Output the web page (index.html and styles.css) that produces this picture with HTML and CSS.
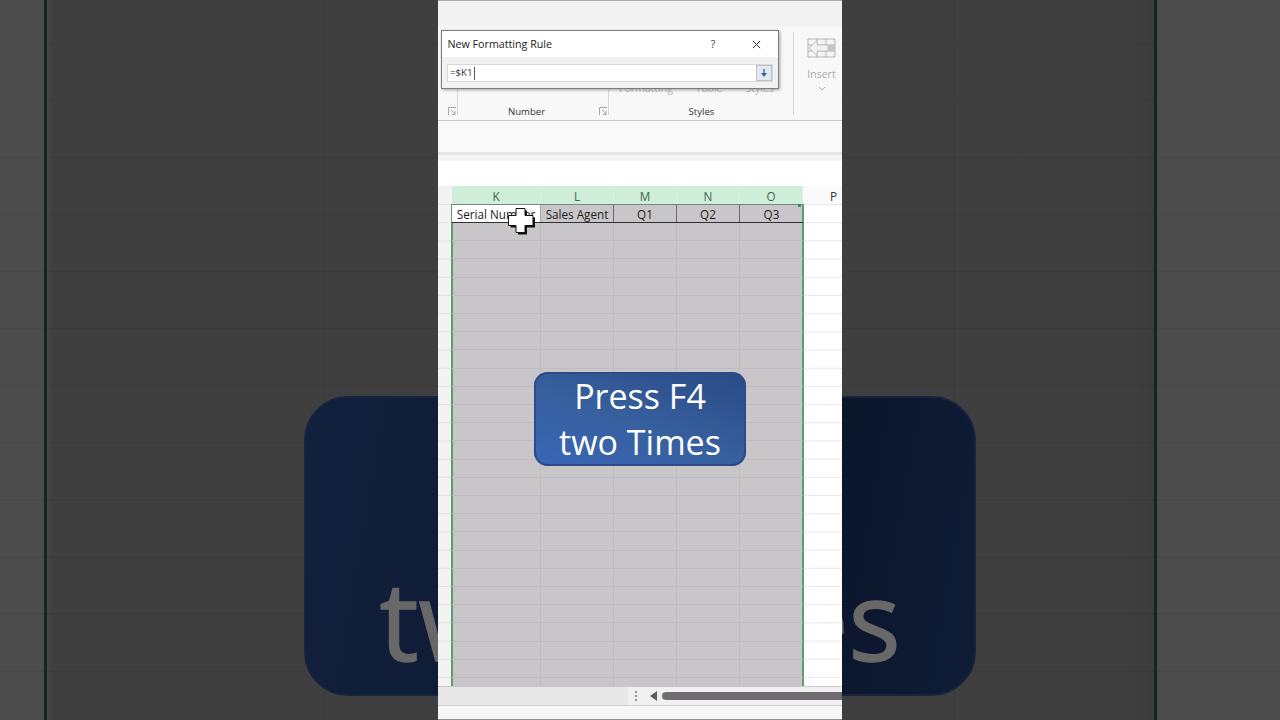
FILE: index.html
```html
<!DOCTYPE html>
<html lang="en">
<head>
<meta charset="utf-8">
<title>New Formatting Rule</title>
<link rel="stylesheet" href="styles.css">
</head>
<body>
<div class="stage">
  <aside class="side side-left"><div class="side-outer"></div><div class="side-inner"></div></aside>
  <main class="phone">
    <div class="title-strip"></div>
    <section class="ribbon">
      <div class="group group-a"><span class="launcher"><svg viewBox="0 0 9 9"><path d="M.5 8V.5H8M3 3l4 4M7 4v3.500H4" /></svg></span></div>
      <div class="group group-number">
        <span class="group-label">Number</span>
        <span class="launcher"><svg viewBox="0 0 9 9"><path d="M.5 8V.5H8M3 3l4 4M7 4v3.500H4" /></svg></span>
      </div>
      <div class="group group-styles">
        <div class="hidden-labels"><span>Formatting</span><span>Table</span><span>Styles</span></div>
        <span class="group-label">Styles</span>
      </div>
      <div class="group group-insert">
        <svg class="insert-icon" viewBox="0 0 29 20">
          <path class="grid-lines" d="M1 1h27v18H1zM10 1v18M19 1v18M1 7h27M1 13h27" />
          <path class="grid-band" d="M10 7h18v6H10z" />
          <path class="grid-arrow" d="M10 2.500 2 10l8 7.500V13h11V7H10z" />
        </svg>
        <span class="insert-label">Insert</span>
        <svg class="insert-chevron" viewBox="0 0 8 5"><path d="M1 1l3 3 3-3" /></svg>
      </div>
    </section>
    <div class="ribbon-foot"></div>
    <div class="formula-gap"></div>
    <section class="sheet">
      <div class="col-heads">
        <span class="corner"></span>
        <span class="col-head col-k">K</span>
        <span class="col-head col-l">L</span>
        <span class="col-head col-q">M</span>
        <span class="col-head col-q">N</span>
        <span class="col-head col-q">O</span>
        <span class="col-head-free">P</span>
      </div>
      <div class="sheet-body">
        <div class="gutter"></div>
        <div class="selection">
          <div class="head-row">
            <span class="cell cell-active col-k">Serial Number</span>
            <span class="cell col-l">Sales Agent</span>
            <span class="cell col-q">Q1</span>
            <span class="cell col-q">Q2</span>
            <span class="cell col-q">Q3</span>
          </div>
          <div class="sel-rows">
            <span class="sel-col col-k"></span>
            <span class="sel-col col-l"></span>
            <span class="sel-col col-q"></span>
            <span class="sel-col col-q"></span>
            <span class="sel-col col-q"></span>
          </div>
          <span class="fill-handle"></span>
        </div>
        <div class="free-cells"></div>
      </div>
    </section>
    <div class="scroll-row">
      <div class="scroll-tabs"></div>
      <div class="scroll-track">
        <span class="scroll-dots"></span>
        <svg class="scroll-left" viewBox="0 0 8 10"><path d="M7 0v10L0 5z" /></svg>
        <span class="scroll-thumb"></span>
      </div>
    </div>
    <div class="status"></div>
  </main>
  <aside class="side side-right"><div class="side-inner"></div><div class="side-outer"></div></aside>

  <div class="ghost-badge"><span class="ghost-text">two Times</span></div>

  <div class="dialog">
    <div class="dialog-title">
      <span class="dialog-name">New Formatting Rule</span>
      <span class="dialog-help">?</span>
      <svg class="dialog-close" viewBox="0 0 10 10"><path d="M1 1l8 8M9 1l-8 8" /></svg>
    </div>
    <div class="dialog-body">
      <div class="ref-input">
        <span class="ref-text">=$K1</span><span class="caret"></span>
        <span class="ref-button"><svg viewBox="0 0 10 10"><path d="M5 1v6" class="ref-stem" /><path d="M2 5h6L5 9z" class="ref-head" /></svg></span>
      </div>
    </div>
  </div>

  <svg class="cursor" viewBox="0 0 30 28">
    <path class="cursor-shadow" d="M11 3.500h9v7h8v10h-8v7h-9v-7H3.500v-10H11z" />
    <path class="cursor-body" d="M9 1.500h9v7h8v10h-8v7H9v-7H1.500v-10H9z" />
  </svg>

  <div class="callout">Press F4<br>two Times</div>
</div>
</body>
</html>
```
FILE: styles.css
```css
* { box-sizing: border-box; }
html, body { margin: 0; height: 100%; }
body { font-family: "Open Sans", "Noto Sans", sans-serif; background: #3f3f3f; overflow: hidden; }

.stage { position: relative; display: flex; width: 1280px; height: 720px; overflow: hidden; }

/* Blurred backdrop on both sides */
.side {
  position: relative; z-index: 0;
  flex: 0 0 438px; height: 720px; display: flex;
  background-image: repeating-linear-gradient(to bottom, transparent 0 43px, rgba(0,0,0,.06) 43px 44.500px, transparent 44.500px 57px);
}
.side-outer { background-color: rgba(255,255,255,.07); }
.side-inner { flex: 1; }
.side-left .side-outer { border-right: 3px solid #14261b; flex: 0 0 47px; }
.side-right .side-outer { border-left: 3px solid #14261b; flex: 0 0 126px; }
.side-left .side-inner { background-image: linear-gradient(to right, rgba(255,255,255,.03), transparent 6px, transparent 277px, rgba(0,0,0,.07) 277px 278px, transparent 278px); }
.side-right .side-inner { background-image: linear-gradient(to right, transparent 112px, rgba(0,0,0,.07) 112px 113px, transparent 113px, transparent 280px, rgba(0,0,0,.05)); }

.ghost-badge {
  position: absolute; left: 304px; top: 396px; width: 672px; height: 300px;
  border-radius: 44px; background: linear-gradient(100deg, #11203d, #0c162b 75%, #0e1c36);
  border: 2px solid #16243f; overflow: hidden; z-index: 0;
}
.ghost-text {
  position: absolute; left: 0; right: 0; top: 156px; text-align: center;
  font-size: 109.500px; line-height: 130px; color: #686868; -webkit-text-stroke: 1.500px #686868;
}

/* Centre column */
.phone { position: relative; z-index: 1; flex: 0 0 404px; height: 720px; display: flex; flex-direction: column; background: #fff; }
.title-strip { height: 26px; background: #f3f2f2; border-top: 1px solid #a8a8a8; flex: none; }

.ribbon { height: 95px; flex: none; display: flex; background: #f9f8f8; border-bottom: 1px solid #cbcaca; }
.group { position: relative; display: flex; flex-direction: column; align-items: center; justify-content: flex-end; padding-bottom: 1px; }
.group::after { content: ""; position: absolute; right: 0; top: 6px; bottom: 5px; width: 1px; background: #d9d8d8; }
.group-a { width: 20px; }
.group-number { width: 151px; padding-right: 14px; }
.group-styles { width: 185px; }
.group-insert { width: 47px; justify-content: flex-start; padding: 12px 0 0 8px; }
.group-insert::after { content: none; }
.group-label { font-size: 9.600px; line-height: 14px; color: #333; }
.launcher { position: absolute; right: 1px; bottom: 4px; width: 9px; height: 9px; }
.launcher svg { display: block; width: 9px; height: 9px; fill: none; stroke: #a6a6a6; stroke-width: 1; }
.hidden-labels { position: absolute; top: 55px; left: 10px; display: flex; gap: 23px; font-size: 10.500px; line-height: 14px; color: #b5b5b5; }
.insert-icon { width: 29px; height: 20px; flex: none; }
.grid-lines { fill: #f4f4f4; stroke: #b4b4b4; stroke-width: 1; }
.grid-band { fill: #c6c6c6; }
.grid-arrow { fill: #f2f2f2; stroke: #c2c2c2; stroke-width: 1; }
.insert-label { margin-top: 9px; font-size: 10.500px; line-height: 14px; color: #aaa; }
.insert-chevron { width: 8px; height: 5px; margin-top: 5px; fill: none; stroke: #b0b0b0; stroke-width: 1; }

.ribbon-foot { height: 34px; flex: none; background: #faf9f9; border-bottom: 3px solid #e6e5e5; }
.formula-gap { height: 31px; flex: none; background: linear-gradient(to bottom, #f5f4f4 0 6px, #fff 6px); }

.sheet { flex: 1; display: flex; flex-direction: column; min-height: 0; }
.col-heads { display: flex; height: 18px; flex: none; font-size: 11.700px; line-height: 20px; }
.corner { flex: 0 0 14px; background: #f3f2f2; }
.col-k { flex: 0 0 89px; }
.col-l { flex: 0 0 73px; }
.col-q { flex: 0 0 63px; }
.col-head { text-align: center; background: #cfeeda; border-right: 1px solid #dcefe2; color: #3c6650; }
.col-head-free { flex: 1; text-align: right; padding-right: 5px; color: #333; background: #fafafa; }

.sheet-body { flex: 1; display: flex; min-height: 0; position: relative; }
.gutter { flex: 0 0 14px; background-color: #f4f3f3; background-image: linear-gradient(to bottom, transparent 17.200px, #e2e2e2 17.200px); background-size: 100% 18.200px; background-position: 0 1px; }
.selection { position: relative; flex: 0 0 353px; display: flex; flex-direction: column; border-left: 2px solid #5f9a72; border-right: 2px solid #5f9a72; margin-left: -1px; margin-right: -1px; background: #c8c6c8; }
.head-row { display: flex; height: 19px; flex: none; margin-left: -1px; margin-right: -1px; font-size: 11.700px; color: #1c1c1c; border-bottom: 1px solid #2f2f2f; border-top: 1px solid #6f8a78; }
.cell { text-align: center; white-space: nowrap; overflow: hidden; border-right: 1px solid #6b6a6b; line-height: 18px; }
.cell-active { background: #fff; border-right-color: #a8a6a8; }
.cell:last-child { border-right: 0; }
.sel-rows { flex: 1; display: flex; margin-left: -1px; margin-right: -1px; background-image: repeating-linear-gradient(to bottom, transparent 0 17.200px, #bebcbe 17.200px 18.200px); }
.sel-col { border-right: 1px solid #bebcbe; }
.sel-col:last-child { border-right: 0; }
.fill-handle { position: absolute; right: 1px; top: 0; width: 3px; height: 3px; background: #3a8a58; }
.free-cells { flex: 1; background-color: #fff; background-image: linear-gradient(to bottom, transparent 17.200px, #e6e6e6 17.200px); background-size: 100% 18.200px; background-position: 0 1px; }

.scroll-row { height: 20px; flex: none; display: flex; background: #e9e8e9; border-top: 1px solid #c9c8c9; border-bottom: 1px solid #d2d1d2; }
.scroll-tabs { flex: 0 0 190px; }
.scroll-track { flex: 1; display: flex; align-items: center; background: #f0f0f1; padding-left: 7px; }
.scroll-dots { width: 2px; height: 10px; background: repeating-linear-gradient(to bottom, #9a9a9a 0 2px, transparent 2px 4px); }
.scroll-left { width: 8px; height: 10px; margin-left: 13px; fill: #5c5b5c; }
.scroll-thumb { flex: 1; height: 8px; margin-left: 4px; background: #6f6d70; border-radius: 4px 0 0 4px; }

.status { height: 14px; flex: none; background: #f8f7f8; border-bottom: 1px solid #8f8f8f; }

/* Dialog floating over the ribbon */
.dialog {
  position: absolute; z-index: 2; left: 441px; top: 30px; width: 338px; height: 59px;
  background: #fff; border: 1px solid #7e7e7e; box-shadow: 1px 1px 3px rgba(0,0,0,.35);
  display: flex; flex-direction: column;
}
.dialog-title { height: 26px; flex: none; display: flex; align-items: center; padding-left: 5.500px; font-size: 10.700px; color: #222; }
.dialog-name { flex: 1; }
.dialog-help { width: 12px; text-align: center; font-size: 10.500px; margin-right: 33px; color: #333; }
.dialog-close { width: 9px; height: 9px; margin-right: 17px; fill: none; stroke: #333; stroke-width: 1.100; }
.dialog-body { flex: 1; background: #f2f1f1; padding: 7px 5px 6px 5px; }
.ref-input { height: 18px; display: flex; align-items: center; background: #fff; border: 1px solid #d8d8d8; padding-left: 2px; font-size: 9.700px; color: #333; }
.ref-text { line-height: 14px; }
.caret { width: 1px; height: 13px; background: #555; margin-left: 1px; }
.ref-button { margin-left: auto; width: 16px; height: 16px; display: flex; align-items: center; justify-content: center; background: #e4e9ef; border: 1px solid #bcc1c6; }
.ref-button svg { width: 10px; height: 10px; }
.ref-stem { stroke: #3f6fa8; stroke-width: 1.400; fill: none; }
.ref-head { fill: #2f67ab; }

.cursor { position: absolute; z-index: 3; left: 507px; top: 207px; width: 30px; height: 28px; }
.cursor-shadow { fill: #111; }
.cursor-body { fill: #fff; stroke: #111; stroke-width: 1; }

.callout {
  position: absolute; z-index: 3; left: 534px; top: 372px; width: 212px; height: 94px; padding-top: 1px;
  border-radius: 14px; box-shadow: inset 0 0 0 2px #2b4c86;
  background: linear-gradient(20deg, #3a67b8 0%, #37609f 45%, #2a4a86 100%);
  color: #fff; text-align: center; font-size: 34px; line-height: 46px;
}
```
